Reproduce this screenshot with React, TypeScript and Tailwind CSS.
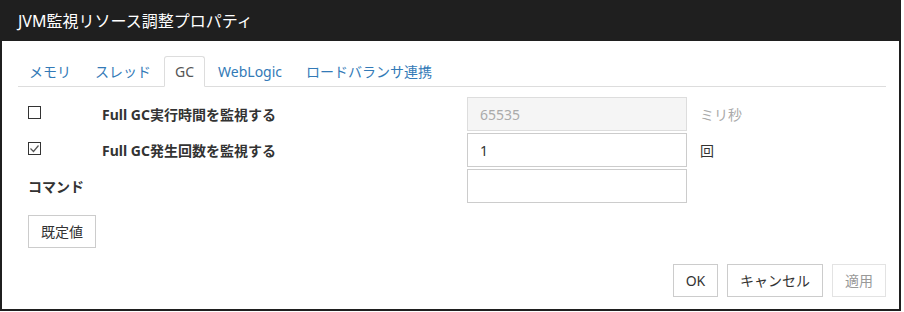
import { useState } from "react";

const tabs = ["メモリ", "スレッド", "GC", "WebLogic", "ロードバランサ連携"];

function CheckBox({ checked }: { checked: boolean }) {
  return (
    <span className="w-[13px] h-[13px] border border-[#333] bg-white flex items-center justify-center -mt-[3px]">
      {checked && (
        <svg width="11" height="11" viewBox="0 0 11 11">
          <path d="M1.5 5.5 L4.5 8.5 L9.5 2.5" fill="none" stroke="#555" strokeWidth="1.2" />
        </svg>
      )}
    </span>
  );
}

function Row({
  checked,
  label,
  value,
  unit,
  disabled,
  noCheck,
}: {
  checked?: boolean;
  label: string;
  value: string;
  unit?: string;
  disabled?: boolean;
  noCheck?: boolean;
}) {
  return (
    <div className="flex items-center h-[34px]">
      {noCheck ? (
        <div className="w-[439px] font-bold text-[#333]">{label}</div>
      ) : (
        <>
          <div className="w-[74px] flex items-center">
            <CheckBox checked={!!checked} />
          </div>
          <div className="w-[365px] font-bold text-[#333]">{label}</div>
        </>
      )}
      <div
        className={`w-[220px] h-[34px] border flex items-center px-3 ${
          disabled ? "bg-[#f5f5f5] border-[#ddd] text-[#aaa]" : "bg-white border-[#ccc] text-[#333]"
        }`}
      >
        {value}
      </div>
      {unit && <div className={`ml-[13px] ${disabled ? "text-[#aaa]" : "text-[#333]"}`}>{unit}</div>}
    </div>
  );
}

export default function App() {
  const [active] = useState("GC");

  return (
    <div
      className="w-[904px] h-[312px] bg-white text-[14px]"
      style={{ fontFamily: '"Noto Sans", "Noto Sans CJK JP", sans-serif' }}
    >
      <div className="w-[901px] h-[311px] flex flex-col">
        <div className="h-[41px] bg-[#1f1f1f] text-white text-[16px] flex items-center pl-[18px] shrink-0">
          JVM監視リソース調整プロパティ
        </div>
        <div className="flex-1 border-2 border-t-0 border-[#1f1f1f] flex flex-col px-[16px] pr-[13px]">
          <div className="mt-[15px] flex gap-[2px] border-b border-[#ddd]">
            {tabs.map((t) => (
              <div
                key={t}
                className={`h-[31px] px-[10px] flex items-center -mb-px ${
                  t === active
                    ? "border border-[#ddd] border-b-white bg-white text-[#555] rounded-t-[3px]"
                    : "border border-transparent text-[#337ab7]"
                }`}
              >
                {t}
              </div>
            ))}
          </div>
          <div className="pl-[10px] mt-[10px] flex flex-col gap-[2px]">
            <Row label="Full GC実行時間を監視する" value="65535" unit="ミリ秒" disabled />
            <Row checked label="Full GC発生回数を監視する" value="1" unit="回" />
            <Row noCheck label="コマンド" value="" />
          </div>
          <div className="pl-[10px] mt-[12px]">
            <button className="h-[33px] w-[68px] border border-[#ccc] bg-white text-[#333]">既定値</button>
          </div>
          <div className="mt-[16px] flex justify-end gap-[9px]">
            <button className="h-[33px] w-[45px] border border-[#ccc] bg-white text-[#333]">OK</button>
            <button className="h-[33px] w-[96px] border border-[#ccc] bg-white text-[#333]">キャンセル</button>
            <button className="h-[33px] w-[54px] border border-[#e3e3e3] bg-white text-[#999]">適用</button>
          </div>
        </div>
      </div>
    </div>
  );
}
